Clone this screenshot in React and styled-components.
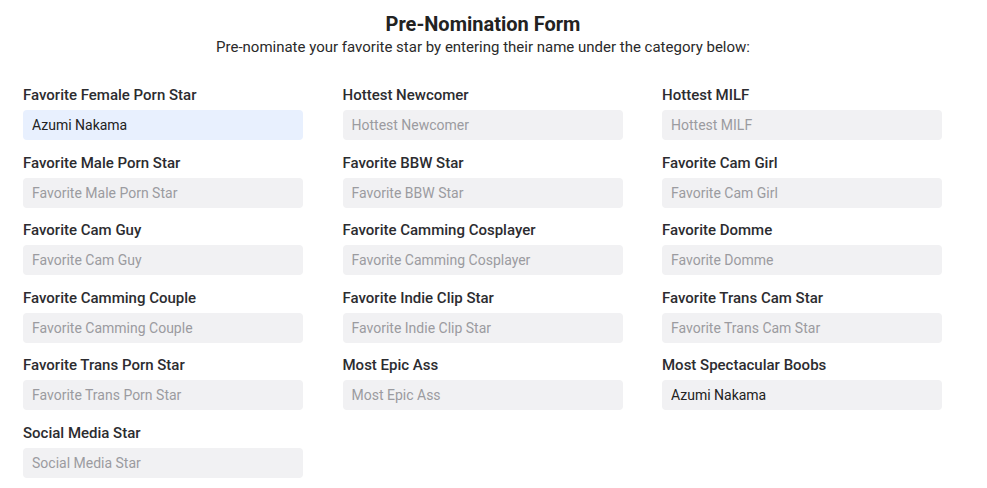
import React, { useState } from "react";
import styled, { createGlobalStyle } from "styled-components";

const GlobalStyle = createGlobalStyle`
  body {
    margin: 0;
    background: #fff;
    font-family: Roboto, "Liberation Sans", sans-serif;
    color: #222;
  }
`;

const Page = styled.div`
  width: 920px;
  padding: 12px 23px 0;
`;

const Header = styled.div`
  text-align: center;
  margin-bottom: 28px;
`;

const Title = styled.h2`
  margin: 0;
  font-size: 20px;
  line-height: 24px;
  font-weight: 700;
  color: #222;
`;

const Subtitle = styled.p`
  margin: 1px 0 0;
  font-size: 15px;
  line-height: 20px;
  color: #2a2a2a;
`;

const Grid = styled.div`
  display: grid;
  grid-template-columns: repeat(3, 280px);
  column-gap: 39.5px;
  row-gap: 12.6px;
`;

const Field = styled.div`
  display: flex;
  flex-direction: column;
  gap: 5px;
`;

const Label = styled.label`
  font-size: 15px;
  line-height: 20px;
  font-weight: 500;
  color: #2c2c30;
`;

const Input = styled.input`
  box-sizing: border-box;
  width: 280px;
  height: 30px;
  padding: 0 9px;
  border: none;
  border-radius: 4px;
  background: ${(p) => (p.$active ? "#e8f0fe" : "#f1f1f3")};
  font-family: Roboto, "Liberation Sans", sans-serif;
  font-size: 14px;
  color: #222;
  outline: none;
  caret-color: #222;

  &::placeholder {
    color: #9b9ba0;
  }
`;

const categories = [
  "Favorite Female Porn Star",
  "Hottest Newcomer",
  "Hottest MILF",
  "Favorite Male Porn Star",
  "Favorite BBW Star",
  "Favorite Cam Girl",
  "Favorite Cam Guy",
  "Favorite Camming Cosplayer",
  "Favorite Domme",
  "Favorite Camming Couple",
  "Favorite Indie Clip Star",
  "Favorite Trans Cam Star",
  "Favorite Trans Porn Star",
  "Most Epic Ass",
  "Most Spectacular Boobs",
  "Social Media Star",
];

export default function App() {
  const [values, setValues] = useState({
    "Favorite Female Porn Star": "Azumi Nakama",
    "Most Spectacular Boobs": "Azumi Nakama",
  });

  return (
    <Page>
      <GlobalStyle />
      <Header>
        <Title>Pre-Nomination Form</Title>
        <Subtitle>
          Pre-nominate your favorite star by entering their name under the category below:
        </Subtitle>
      </Header>
      <Grid>
        {categories.map((cat, i) => (
          <Field key={cat}>
            <Label htmlFor={`cat-${i}`}>{cat}</Label>
            <Input
              id={`cat-${i}`}
              placeholder={cat}
              value={values[cat] || ""}
              $active={i === 0}
              autoFocus={i === 0}
              onChange={(e) => setValues({ ...values, [cat]: e.target.value })}
            />
          </Field>
        ))}
      </Grid>
    </Page>
  );
}
